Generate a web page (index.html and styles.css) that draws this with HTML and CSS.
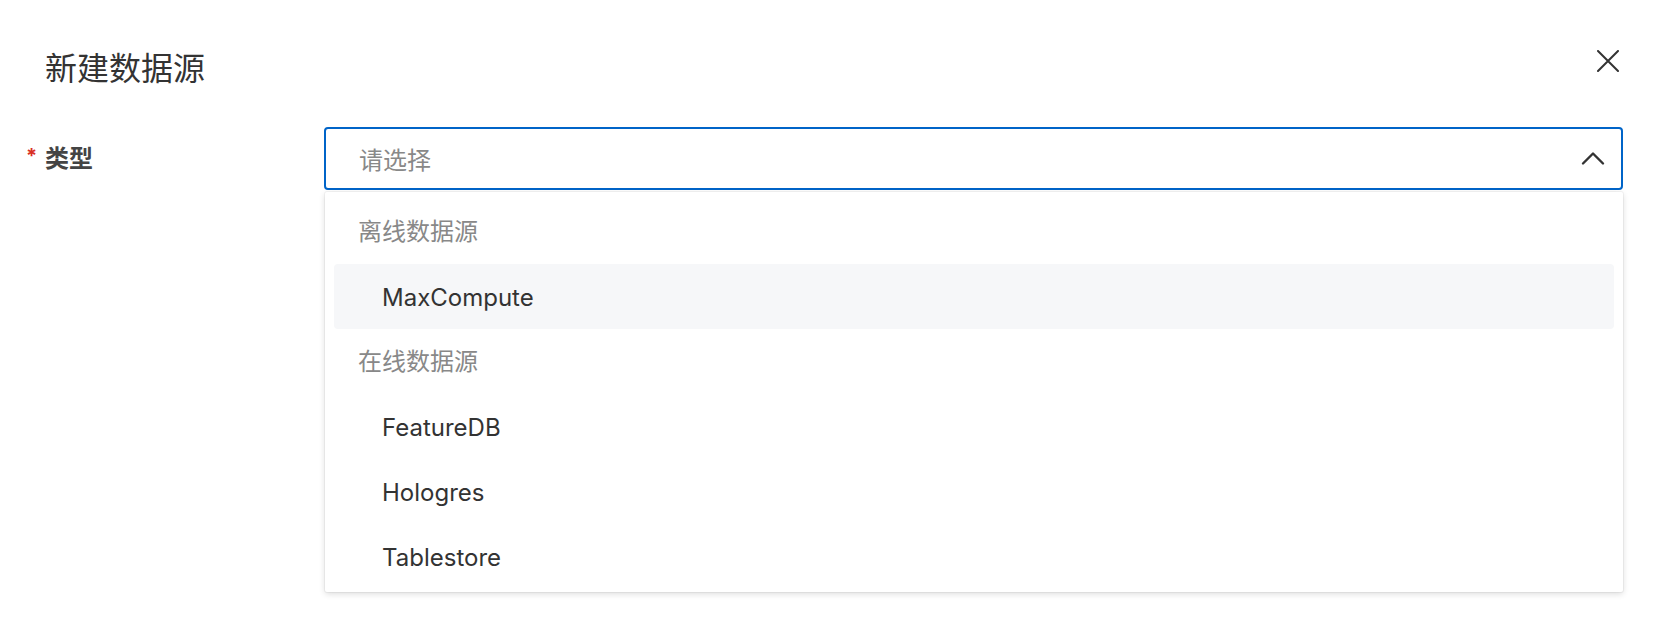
FILE: index.html
```
<!DOCTYPE html>
<html lang="zh-CN">
<head>
    <meta charset="UTF-8">
    <meta name="viewport" content="width=device-width, initial-scale=1.0">
    <title>新建数据源</title>
    <link rel="stylesheet" href="styles.css">
</head>
<body>

<div class="dialog">
    <div class="dialog-header">
        <h2 class="dialog-title">新建数据源</h2>
        <button type="button" class="close-btn" aria-label="关闭">
            <svg width="22" height="22" viewBox="0 0 22 22">
                <path d="M1 1 L21 21 M21 1 L1 21" stroke="#333" stroke-width="2" fill="none" stroke-linecap="round"/>
            </svg>
        </button>
    </div>

    <div class="form-row">
        <div class="form-label"><span class="required">*</span>类型</div>
        <div class="select-wrap">
            <div class="select">
                <span class="placeholder">请选择</span>
                <svg class="arrow" width="24" height="16" viewBox="0 0 24 16">
                    <path d="M2 13.5 L12 3.5 L22 13.5" stroke="#333" stroke-width="2.4" fill="none" stroke-linecap="round" stroke-linejoin="round"/>
                </svg>
            </div>

            <div class="options">
                <div class="opt-group">离线数据源</div>
                <div class="opt-item opt-active">MaxCompute</div>
                <div class="opt-group">在线数据源</div>
                <div class="opt-item">FeatureDB</div>
                <div class="opt-item">Hologres</div>
                <div class="opt-item">Tablestore</div>
            </div>
        </div>
    </div>
</div>

</body>
</html>
```

FILE: styles.css
```
body {
    margin: 0;
    background-color: #fff;
    font-family: Inter, "Noto Sans CJK SC", sans-serif;
    color: #333;
}

.dialog {
    padding: 0 43px 45px 45px;
}

.dialog-header {
    display: flex;
    justify-content: space-between;
    align-items: flex-start;
    padding-top: 47px;
}

.dialog-title {
    margin: 0;
    font-size: 32px;
    line-height: 44px;
    font-weight: 400;
    color: #333;
}

.close-btn {
    margin: 3px 4px 0 0;
    padding: 0;
    border: none;
    background: none;
    width: 22px;
    height: 22px;
    cursor: pointer;
}

.close-btn svg {
    display: block;
}

.form-row {
    display: flex;
    align-items: flex-start;
    margin-top: 36px;
}

.form-label {
    width: 279px;
    flex: none;
    font-size: 24px;
    line-height: 63px;
    font-weight: 600;
    color: #444;
}

.required {
    display: inline-block;
    width: 19px;
    margin-left: -19px;
    color: #d93026;
    font-size: 20px;
    font-weight: 700;
    vertical-align: top;
    line-height: 58px;
}

.select-wrap {
    flex: 1;
}

.select {
    box-sizing: border-box;
    height: 63px;
    border: 2px solid #0064c8;
    border-radius: 4px;
    display: flex;
    align-items: center;
    justify-content: space-between;
    padding: 0 16px 0 33px;
}

.placeholder {
    font-size: 24px;
    color: #888;
}

.arrow {
    display: block;
    margin-bottom: 1px;
}

.options {
    margin: 2px 0 0 1px;
    padding: 7px 9px 3px;
    background-color: #fff;
    border-radius: 2px;
    box-shadow: 0 0 0 1px rgba(0, 0, 0, 0.04), 0 2px 6px rgba(0, 0, 0, 0.14);
}

.opt-group,
.opt-item {
    height: 65px;
    line-height: 65px;
    font-size: 24px;
}

.opt-group {
    padding-left: 24px;
    color: #888;
}

.opt-item {
    box-sizing: border-box;
    padding: 3px 0 0 48px;
    line-height: 62px;
    color: #333;
    border-radius: 4px;
}

.opt-active {
    background-color: #f6f7f9;
}
```
